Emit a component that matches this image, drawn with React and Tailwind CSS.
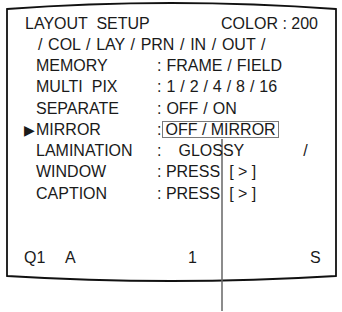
const rows = [
  { label: 'MEMORY', value: ': FRAME / FIELD' },
  { label: 'MULTI  PIX', value: ': 1 / 2 / 4 / 8 / 16' },
  { label: 'SEPARATE', value: ': OFF / ON' },
  { label: 'MIRROR', value: 'mirror', active: true },
  { label: 'LAMINATION', value: 'lamination' },
  { label: 'WINDOW', value: 'press' },
  { label: 'CAPTION', value: 'press' },
]

function Value({ value }) {
  if (value === 'mirror') {
    return (
      <span className="flex items-center">
        <span>:</span>
        <span className="ml-[1px] flex h-[17px] items-center border-[1.5px] border-[#7a7a7a] px-[2px] leading-none">
          OFF / MIRROR
        </span>
      </span>
    )
  }
  if (value === 'lamination') {
    return (
      <span className="flex">
        <span>:</span>
        <span className="ml-[17px]">GLOSSY</span>
        <span className="ml-[59px]">/</span>
      </span>
    )
  }
  if (value === 'press') {
    return (
      <span className="flex">
        <span>: PRESS</span>
        <span className="ml-[9px]">[ &gt; ]</span>
      </span>
    )
  }
  return <span className="whitespace-pre [word-spacing:0.5px]">{value}</span>
}

export default function App() {
  return (
    <div
      className="relative h-[312px] w-[342px] overflow-hidden bg-white text-[16px] text-[#1a1a1a]"
      style={{ fontFamily: '"Liberation Sans", Arial, sans-serif' }}
    >
      <svg className="absolute inset-0" width="342" height="312" viewBox="0 0 342 312" fill="none">
        <path d="M7 9 Q171 -3 336 9 L336 276 Q171 286 7 276 Z" stroke="#111" strokeWidth="1.8" />
        <line x1="222" y1="139" x2="222" y2="311" stroke="#666" strokeWidth="1.5" />
      </svg>

      <div className="relative flex flex-col pt-[13px]">
        <div className="flex h-[21.25px] items-center pl-[25px]">
          <span className="whitespace-pre">LAYOUT  SETUP</span>
          <span className="ml-auto mr-[24px] whitespace-pre">COLOR : 200</span>
        </div>
        <div className="flex h-[21.25px] items-center whitespace-pre pl-[38px] [word-spacing:1.2px]">
          / COL / LAY / PRN / IN / OUT /
        </div>
        {rows.map((r) => (
          <div key={r.label} className="flex h-[21.25px] items-center">
            <span className="w-[36px] pl-[24px] text-[14px] leading-none">{r.active ? '▶' : ''}</span>
            <span className="w-[121px] whitespace-pre">{r.label}</span>
            <Value value={r.value} />
          </div>
        ))}
        <div className="mt-[43px] flex h-[21.25px] items-center pl-[24px]">
          <span className="w-[41px]">Q1</span>
          <span className="w-[123px]">A</span>
          <span className="w-[122px]">1</span>
          <span>S</span>
        </div>
      </div>
    </div>
  )
}
